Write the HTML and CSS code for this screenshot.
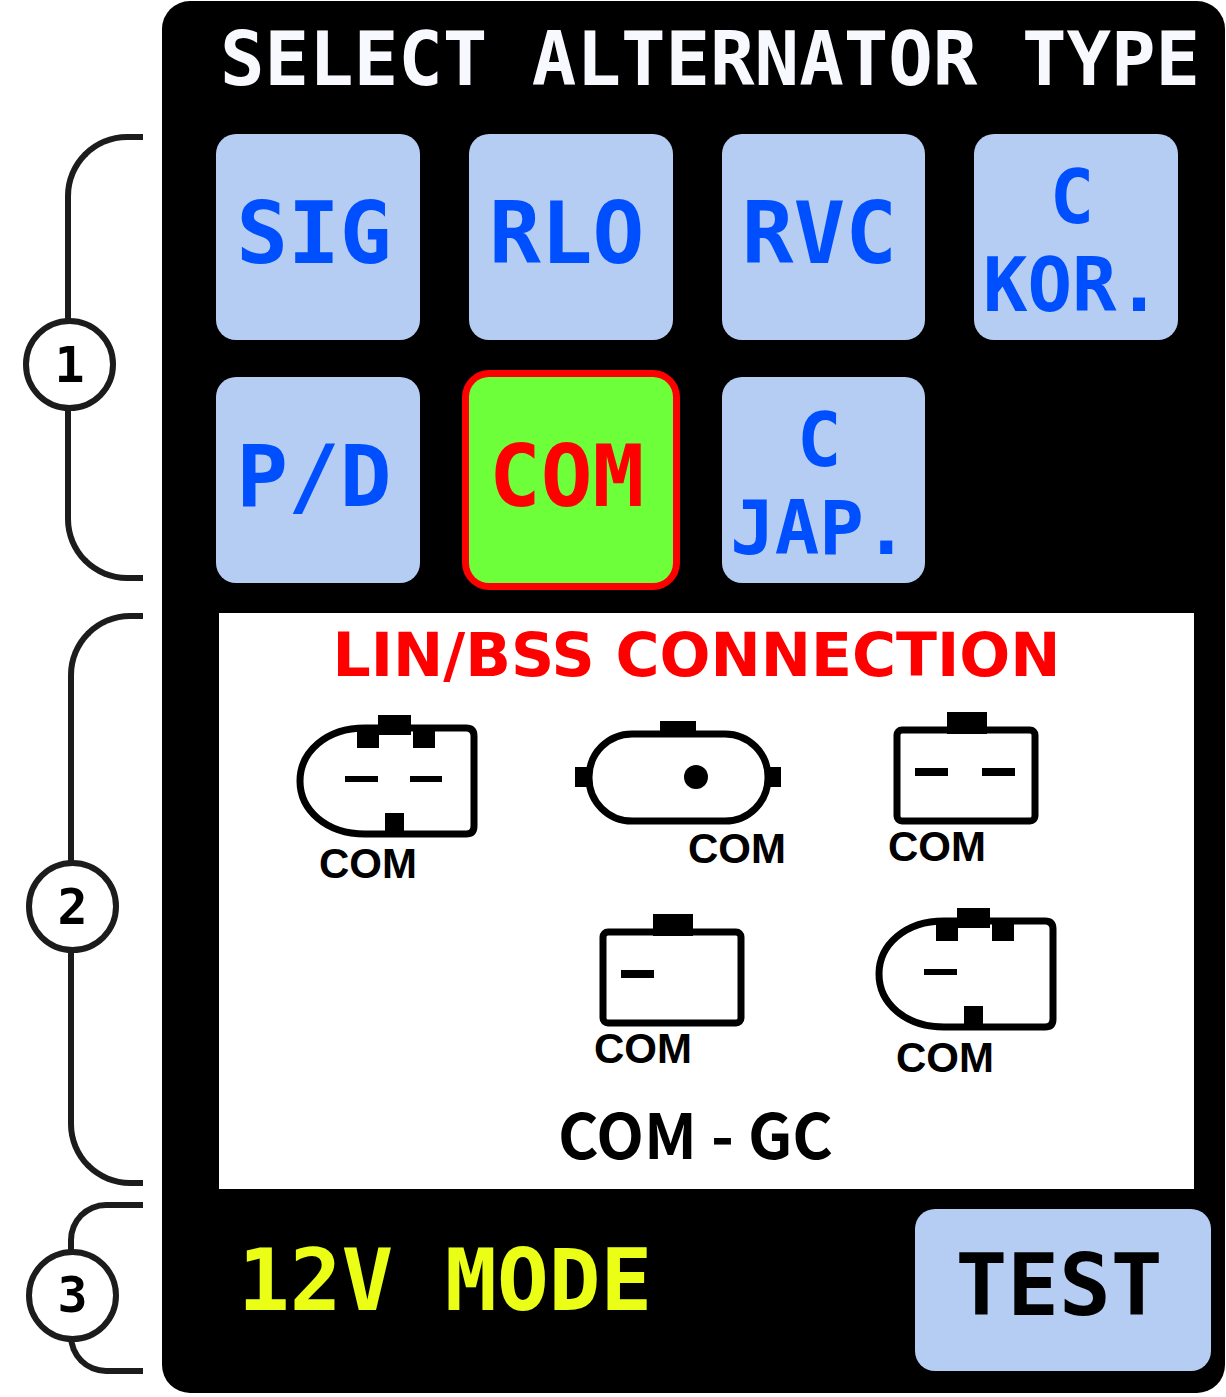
FILE: index.html
```html
<!DOCTYPE html>
<html lang="en">
<head>
<meta charset="utf-8">
<meta name="viewport" content="width=device-width, initial-scale=1">
<title>Select alternator type</title>
<link rel="stylesheet" href="styles.css">
</head>
<body>
<div class="manual">
  <div class="callout callout-types"><span class="badge">1</span></div>
  <div class="callout callout-connection"><span class="badge">2</span></div>
  <div class="callout callout-footer"><span class="badge">3</span></div>

  <main class="screen">
    <h1 class="title">SELECT ALTERNATOR TYPE</h1>

    <div class="types">
      <button type="button" class="type">SIG</button>
      <button type="button" class="type">RLO</button>
      <button type="button" class="type">RVC</button>
      <button type="button" class="type type-long">C<br>KOR.</button>
      <button type="button" class="type">P/D</button>
      <button type="button" class="type selected" aria-pressed="true">COM</button>
      <button type="button" class="type type-long">C<br>JAP.</button>
    </div>

    <section class="connection">
      <h2 class="connection-title">LIN/BSS CONNECTION</h2>
      <svg class="connectors" viewBox="0 0 975 390" role="img" aria-label="Connector pinouts">
        <defs>
          <g id="shell-d">
            <path class="line" d="M69 16H170Q178 16 178 24V114Q178 122 170 122H69C30 122 4 98 4 69S30 16 69 16Z"/>
            <path d="M82 3h33v20H82zM61 18h22v18H61zM117 18h22v18h-22zM89 101h19v21H89zM49 64h33v6H49z"/>
          </g>
          <g id="shell-box">
            <rect class="line" x="4" y="18" width="138" height="91" rx="5"/>
            <path d="M54 0h40v22H54zM22 56h33v8H22z"/>
          </g>
        </defs>

        <use href="#shell-d" x="77" y="12"/>
        <path d="M191 76h32v6h-32z"/>
        <text x="100" y="178">COM</text>

        <rect class="line" x="370" y="34" width="179" height="87" rx="43"/>
        <path d="M441 21h36v14h-36zM356 67h15v20h-15zM548 67h14v20h-14z"/>
        <circle cx="477" cy="77" r="12"/>
        <text x="469" y="163">COM</text>

        <use href="#shell-box" x="674" y="12"/>
        <path d="M763 68h33v8h-33z"/>
        <text x="669" y="161">COM</text>

        <use href="#shell-box" x="380" y="214"/>
        <text x="375" y="363">COM</text>

        <use href="#shell-d" x="656" y="205"/>
        <text x="677" y="372">COM</text>
      </svg>
      <p class="connection-code">COM - GC</p>
    </section>

    <div class="footer">
      <p class="mode">12V MODE</p>
      <button type="button" class="test">TEST</button>
    </div>
  </main>
</div>
</body>
</html>
```
FILE: styles.css
```css
* {
  box-sizing: border-box;
}

body {
  margin: 0;
  background: #fff;
}

h1, h2, p {
  margin: 0;
}

.manual {
  display: grid;
  grid-template-columns: 162px minmax(0, 1fr);
  grid-template-rows: auto auto auto auto;
  padding: 1px 1px 4px 0;
  font-family: "DejaVu Sans Mono", monospace;
  font-weight: 700;
}

.screen {
  grid-column: 2;
  grid-row: 1 / -1;
  display: grid;
  grid-template-rows: subgrid;
  background: #000;
  border-radius: 28px;
}

/* Numbered brackets, one beside each block of the screen */
.callout {
  grid-column: 1;
  display: grid;
  align-items: center;
  margin: 0 19px 0 68px;
  padding-top: 14px;
  border: 6px solid #1c1c1c;
  border-right: 0;
  border-radius: 62px 0 0 62px;
}

.callout-types {
  grid-row: 2;
  margin-left: 65px;
  margin-bottom: 2px;
}

.callout-connection {
  grid-row: 3;
  margin-top: 30px;
  margin-bottom: 3px;
}

.callout-footer {
  grid-row: 4;
  margin-top: 13px;
  margin-bottom: 19px;
  border-radius: 38px 0 0 38px;
}

.badge {
  display: grid;
  place-items: center;
  width: 93px;
  height: 93px;
  margin-left: -48px;
  border: 6px solid #1c1c1c;
  border-radius: 50%;
  background: #fff;
  color: #000;
  font-size: 50px;
  line-height: 1;
}

.title {
  padding: 14px 0 31px 58px;
  color: #f8f9fe;
  font-size: 74px;
  line-height: 88px;
  white-space: nowrap;
}

.types {
  display: grid;
  grid-template-columns: repeat(4, minmax(0, 1fr));
  gap: 37px 49px;
  padding: 0 47px 0 54px;
}

.type,
.test {
  border: 0;
  border-radius: 20px;
  background: #b5cdf2;
  color: #004fff;
  font-family: inherit;
  font-size: 86px;
  font-weight: 700;
  line-height: 88px;
  white-space: nowrap;
}

.type {
  min-height: 206px;
  padding: 0 8px 8px 0;
}

.type-long {
  padding-top: 8px;
  padding-bottom: 0;
  font-size: 74px;
}

.selected {
  background: #6eff3b;
  box-shadow: 0 0 0 7px #f00;
  color: #f00;
}

.connection {
  margin: 30px 31px 0 57px;
  background: #fff;
  color: #000;
  text-align: center;
}

.connection-title {
  padding: 2px 20px 5px 0;
  color: #f00;
  font-family: "DejaVu Sans", sans-serif;
  font-size: 60px;
  line-height: 80px;
}

.connectors {
  display: block;
  width: 100%;
}

.connectors .line {
  fill: none;
  stroke: #000;
  stroke-width: 7px;
}

.connectors text {
  font-family: "Liberation Sans", Arial, sans-serif;
  font-size: 42px;
  font-weight: 700;
}

.connection-code {
  padding: 2px 22px 17px 0;
  font-family: "Noto Sans CJK SC", sans-serif;
  font-size: 62px;
  line-height: 80px;
}

.footer {
  display: flex;
  align-items: center;
  justify-content: space-between;
  padding: 20px 14px 22px 76px;
}

.mode {
  padding-bottom: 20px;
  color: #eaff15;
  font-size: 86px;
  line-height: 88px;
}

.test {
  width: 296px;
  min-height: 162px;
  padding: 0 8px 10px 0;
  color: #000;
}
```
